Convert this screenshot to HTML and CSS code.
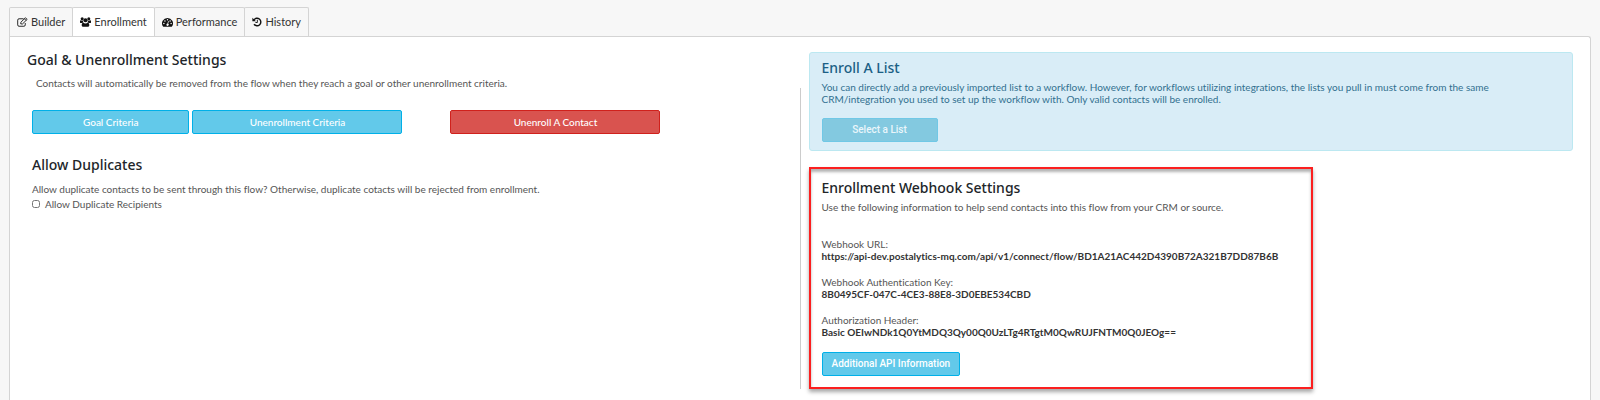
FILE: index.html
```
<!DOCTYPE html>
<html lang="en">
<head>
	<meta charset="UTF-8">
	<title>Enrollment</title>
	<link rel="stylesheet" href="styles.css">
</head>
<body>
	<nav class="tabs">
		<a class="tab" href="#builder">
			<svg class="icon" viewBox="0 0 16 14" fill="none" stroke="currentColor"><path d="M12 8.5v2.7a2 2 0 0 1-2 2H3a2 2 0 0 1-2-2V4.300a2 2 0 0 1 2-2h6.500" stroke-width="1.300"/><path d="M5.500 9.800V7.500L12.300.8l2.400 2.400L8 9.800z" stroke-width="1.300"/><path d="M10.800 2.300l2.400 2.400" stroke-width="1.300"/></svg>
			Builder
		</a>
		<a class="tab active" href="#enrollment">
			<svg class="icon" viewBox="0 0 16 14" fill="currentColor"><circle cx="3.200" cy="2.400" r="2.200"/><circle cx="12.800" cy="2.400" r="2.200"/><circle cx="8" cy="4.500" r="3"/><path d="M0 5.800C0 4.800.6 4.300 1.300 4.500c1 .7 2 .6 2.900.4.100 1.200.4 2 1 2.700-.9 0-1.700.4-2.300 1H1.600C.6 8.600 0 8 0 7.200zM16 5.800c0-1-.6-1.500-1.300-1.300-1 .7-2 .6-2.900.4-.1 1.200-.4 2-1 2.700.9 0 1.700.4 2.300 1h1.300c1 0 1.600-.6 1.600-1.400z"/><path d="M2.500 11.800c0-2 .6-3.700 2.300-3.700.9.700 2 1.200 3.200 1.200s2.300-.5 3.200-1.200c1.700 0 2.300 1.700 2.300 3.700 0 1.400-.8 2.200-2.100 2.200H4.600c-1.300 0-2.100-.8-2.100-2.200z"/></svg>
			Enrollment
		</a>
		<a class="tab" href="#performance">
			<svg class="icon" viewBox="0 0 16 14"><path d="M8 1a8 8 0 0 0-6.700 12.300l.6.500h12.200l.6-.5A8 8 0 0 0 8 1z" fill="currentColor"/><g fill="#f7f7f7"><circle cx="2.700" cy="9.300" r="1.100"/><circle cx="4.300" cy="5.400" r="1.100"/><circle cx="8" cy="3.700" r="1.100"/><circle cx="11.800" cy="5.400" r="1.100"/><circle cx="13.300" cy="9.300" r="1.100"/><path d="M8.900 5.700l1 .3-.9 3.500a1.700 1.700 0 1 1-1-.2z"/></g></svg>
			Performance
		</a>
		<a class="tab" href="#history">
			<svg class="icon narrow" viewBox="0 0 14 14"><path d="M2.500 4.300A5.300 5.300 0 1 1 2.800 10.200" fill="none" stroke="currentColor" stroke-width="2"/><path d="M.5 1v5h5z" fill="currentColor"/><path d="M7.500 4v3.700H4.800" fill="none" stroke="currentColor" stroke-width="1.300"/></svg>
			History
		</a>
	</nav>

	<main class="panel">
		<section class="left">
			<h2>Goal &amp; Unenrollment Settings</h2>
			<p class="intro">Contacts will automatically be removed from the flow when they reach a goal or other unenrollment criteria.</p>
			<div class="criteria">
				<button class="btn" type="button">Goal Criteria</button>
				<button class="btn" type="button">Unenrollment Criteria</button>
				<button class="btn danger" type="button">Unenroll A Contact</button>
			</div>
			<div class="duplicates">
				<h2>Allow Duplicates</h2>
				<p>Allow duplicate contacts to be sent through this flow? Otherwise, duplicate cotacts will be rejected from enrollment.</p>
				<label class="check" for="allow"><input type="checkbox" id="allow">Allow Duplicate Recipients</label>
			</div>
		</section>

		<div class="divider"></div>

		<section class="right">
			<div class="enroll">
				<h2>Enroll A List</h2>
				<p>You can directly add a previously imported list to a workflow. However, for workflows utilizing integrations, the lists you pull in must come from the same CRM/integration you used to set up the workflow with. Only valid contacts will be enrolled.</p>
				<button class="btn alt select" type="button" disabled>Select a List</button>
			</div>
			<div class="webhook">
				<h2>Enrollment Webhook Settings</h2>
				<p>Use the following information to help send contacts into this flow from your CRM or source.</p>
				<dl>
					<dt>Webhook URL:</dt>
					<dd>https://api-dev.postalytics-mq.com/api/v1/connect/flow/BD1A21AC442D4390B72A321B7DD87B6B</dd>
					<dt>Webhook Authentication Key:</dt>
					<dd>8B0495CF-047C-4CE3-88E8-3D0EBE534CBD</dd>
					<dt>Authorization Header:</dt>
					<dd>Basic OEIwNDk1Q0YtMDQ3Qy00Q0UzLTg4RTgtM0QwRUJFNTM0Q0JEOg==</dd>
				</dl>
				<button class="btn alt" type="button">Additional API Information</button>
			</div>
		</section>
	</main>
</body>
</html>
```
FILE: styles.css
```
*{
	box-sizing: border-box;
	margin: 0;
	padding: 0;
}
body{
	display: flex;
	flex-direction: column;
	min-height: 100vh;
	padding: 7px 9px 0;
	background: #f7f7f7;
	color: #555;
	font: 10px/12px "Segoe UI", Lato, sans-serif;
	font-variant-ligatures: none;
}
h2{
	color: #212529;
	font-family: "Segoe UI", "Noto Sans", sans-serif;
	font-size: 14px;
	font-weight: 500;
	line-height: 16px;
}

/* tabs */
.tabs{
	display: flex;
}
.tab{
	display: flex;
	align-items: center;
	gap: 3px;
	height: 29px;
	padding: 0 7px;
	border: 1px solid #d4d4d4;
	border-bottom: 0;
	border-radius: 2px 2px 0 0;
	margin-right: -1px;
	color: #333;
	font-size: 11px;
	text-decoration: none;
}
.tab.active{
	background: #fff;
}
.icon{
	width: 11px;
	height: 10px;
	color: #111;
}
.icon.narrow{
	width: 10px;
}

/* panel */
.panel{
	display: grid;
	grid-template-columns: 1fr 1px 1fr;
	flex: 1;
	padding: 15px 17px 12px;
	border: 1px solid #d4d4d4;
	border-bottom: 0;
	border-radius: 0 3px 0 0;
	background: #fff;
}
.divider{
	margin-top: 36px;
	background: #ccc;
}
.intro{
	padding: 9px 9px 0;
}
.criteria{
	display: grid;
	grid-template-columns: 3fr 4fr 42px 4fr;
	gap: 3px;
	padding: 21px 18% 0 5px;
}
.btn{
	height: 24px;
	border: 1px solid #00b0e8;
	border-radius: 2px;
	background: #62c9ea;
	color: #fff;
	font: 500 10px/12px "Segoe UI", Lato, sans-serif;
}
.btn.danger{
	grid-column: 4;
	border-color: #d0211c;
	background: #d9534f;
}
.btn.alt{
	padding: 0 9px;
	font-family: Roboto, sans-serif;
	font-weight: 500;
}
.duplicates{
	padding: 23px 5px 0;
}
.duplicates p{
	padding-top: 10px;
}
.check{
	display: flex;
	align-items: center;
	gap: 5px;
	padding-top: 3px;
}
.check input{
	width: 8px;
	height: 8px;
}

/* right column */
.right{
	padding-left: 8px;
}
.right p{
	padding-top: 5px;
}
.enroll{
	padding: 7px 12px 8px;
	border: 1px solid #bce8f1;
	border-radius: 3px;
	background: #d9edf7;
	color: #31708f;
}
.enroll h2{
	color: #1b6085;
}
.btn.select{
	width: 116px;
	margin-top: 13px;
	border-color: #70c8e6;
	background: #83c9e0;
	color: #eaf6fb;
}
.webhook{
	width: 66%;
	padding: 11px 11px 11px;
	margin-top: 16px;
	border: 2px solid #fb1f1f;
	box-shadow: 0 3px 4px rgba(0,0,0,.35), inset 0 3px 3px rgba(0,0,0,.3);
}
dl{
	padding: 25px 0 0;
}
dd{
	margin-bottom: 14px;
	color: #333;
	font-weight: 700;
}
```
